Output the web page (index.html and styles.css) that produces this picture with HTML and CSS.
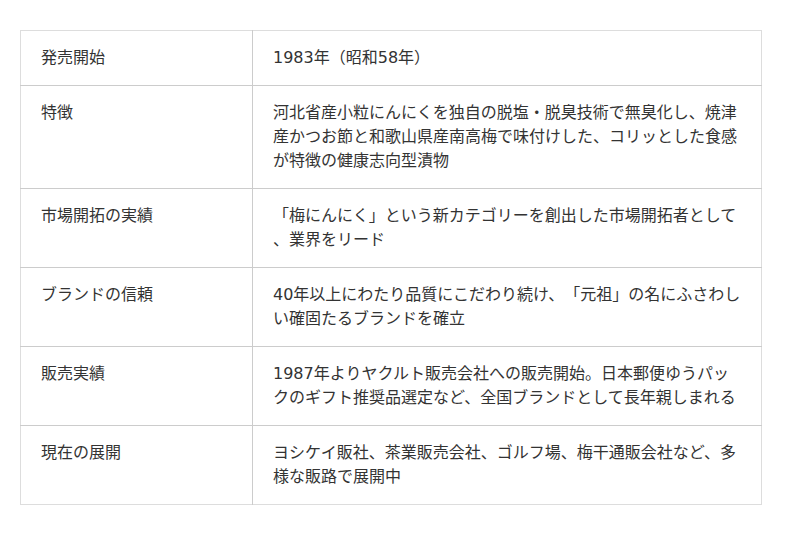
FILE: index.html
```html
<!DOCTYPE html>
<html lang="ja">
<head>
<meta charset="utf-8">
<link rel="stylesheet" href="styles.css">
</head>
<body>
<table class="spec">
  <tr><th>発売開始</th><td>1983年（昭和58年）</td></tr>
  <tr><th>特徴</th><td>河北省産小粒にんにくを独自の脱塩・脱臭技術で無臭化し、焼津産かつお節と和歌山県産南高梅で味付けした、コリッとした食感が特徴の健康志向型漬物</td></tr>
  <tr><th>市場開拓の実績</th><td>「梅にんにく」という新カテゴリーを創出した市場開拓者として、業界をリード</td></tr>
  <tr><th>ブランドの信頼</th><td>40年以上にわたり品質にこだわり続け、「元祖」の名にふさわしい確固たるブランドを確立</td></tr>
  <tr><th>販売実績</th><td>1987年よりヤクルト販売会社への販売開始。日本郵便ゆうパックのギフト推奨品選定など、全国ブランドとして長年親しまれる</td></tr>
  <tr><th>現在の展開</th><td>ヨシケイ販社、茶業販売会社、ゴルフ場、梅干通販会社など、多様な販路で展開中</td></tr>
</table>
</body>
</html>
```
FILE: styles.css
```css
html, body {
  margin: 0;
  padding: 0;
  background: #fff;
}
body {
  padding: 30px 20px;
  font-family: "DejaVu Sans", "Noto Sans CJK JP", sans-serif;
  color: #333;
}
.spec {
  width: 742px;
  border-collapse: collapse;
  border: 1px solid #ddd;
  font-size: 16px;
  line-height: 24px;
}
.spec th, .spec td {
  padding: 15px 20px;
  text-align: left;
  vertical-align: top;
  font-weight: normal;
  border-top: 1px solid #ccc;
  text-spacing-trim: space-all;
}
.spec tr:first-child th, .spec tr:first-child td {
  border-top-color: #ddd;
}
.spec th {
  width: 191px;
  border-right: 1px solid #ccc;
}
.spec td {
  line-break: anywhere;
}
```
